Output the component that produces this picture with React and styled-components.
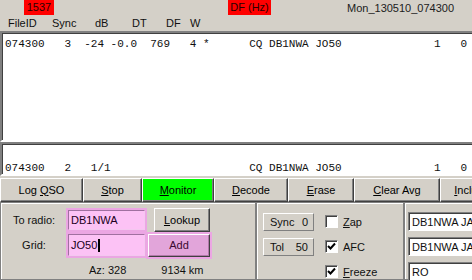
import React from "react";
import styled, { createGlobalStyle } from "styled-components";

const GlobalStyle = createGlobalStyle`
  html, body {
    margin: 0;
    padding: 0;
    width: 472px;
    height: 280px;
    overflow: hidden;
    background: #d4d0c8;
  }
`;

const Window = styled.div`
  width: 540px;
  height: 280px;
  display: flex;
  flex-direction: column;
  background: #d4d0c8;
  font-family: "Liberation Sans", Arial, sans-serif;
  font-size: 11px;
  color: #000;
  overflow: hidden;
  & > * {
    flex-shrink: 0;
  }
`;

const TopBar = styled.div`
  display: flex;
  align-items: center;
  height: 15px;
  padding-left: 24px;
`;

const RedTag = styled.div`
  width: ${(p) => p.$w}px;
  height: 15px;
  line-height: 15px;
  margin-left: ${(p) => p.$ml || 0}px;
  background: #ff0000;
  color: #2a0000;
  text-align: center;
`;

const Stamp = styled.div`
  margin-left: 76px;
  color: #202020;
`;

const HeaderRow = styled.div`
  display: grid;
  grid-template-columns: 44px 43px 37px 34px 24px auto;
  align-items: center;
  height: 16px;
  padding-left: 8px;
  color: #101010;
`;

const TextPane = styled.div`
  height: ${(p) => p.$h}px;
  box-sizing: border-box;
  padding: ${(p) => p.$pt}px 0 0 3px;
  background: #fff;
  border: 2px solid;
  border-color: #808080 #fff #fff #808080;
  box-shadow: inset 1px 1px #404040;
  font-family: "Liberation Mono", "Courier New", monospace;
  font-size: 11px;
  line-height: 14px;
  white-space: pre;
  color: #101010;
`;

const ButtonBar = styled.div`
  display: flex;
  height: 24px;
  margin-top: 2px;
`;

const ToolButton = styled.div`
  flex: none;
  width: ${(p) => p.$w}px;
  box-sizing: border-box;
  display: flex;
  align-items: center;
  justify-content: center;
  padding-bottom: 1px;
  background: ${(p) => (p.$on ? "#00ff00" : "#d4d0c8")};
  border: 1px solid;
  border-color: #fff #404040 #404040 #fff;
  box-shadow: inset -1px -1px #808080;
  color: #000;
`;

const Key = styled.span`
  text-decoration: underline;
`;

const BottomBar = styled.div`
  display: flex;
  height: 78px;
`;

const Group = styled.div`
  flex: none;
  width: ${(p) => p.$w}px;
  box-sizing: border-box;
  border: 1px solid #808080;
  box-shadow: inset 1px 1px #fff;
  padding: ${(p) => p.$pad};
`;

const FormRow = styled.div`
  display: flex;
  align-items: center;
  height: ${(p) => p.$h}px;
`;

const FieldLabel = styled.div`
  width: 56px;
  margin: 0 4px 0 5px;
  text-align: center;
  color: #101010;
`;

const PinkFrame = styled.div`
  width: ${(p) => p.$w}px;
  height: ${(p) => p.$h}px;
  box-sizing: border-box;
  padding: 2px;
  margin-left: ${(p) => p.$ml || 0}px;
  background: #eba6e3;
  display: flex;
`;

const PinkInput = styled.div`
  flex: 1;
  display: flex;
  align-items: center;
  padding-left: 2px;
  border: 1px solid;
  border-color: #a070a0 #f4c8f0 #f4c8f0 #a070a0;
  background: #fcc2f5;
  color: #200020;
`;

const Caret = styled.span`
  width: 2px;
  height: 13px;
  margin-left: 1px;
  background: #000;
`;

const FormButton = styled.div`
  width: ${(p) => p.$w}px;
  height: ${(p) => p.$h}px;
  box-sizing: border-box;
  display: flex;
  align-items: center;
  justify-content: center;
  margin-left: ${(p) => p.$ml || 0}px;
  background: ${(p) => (p.$pink ? "#e2a5da" : "#d4d0c8")};
  border: 1px solid;
  border-color: #fff #404040 #404040 #fff;
  box-shadow: inset -1px -1px ${(p) => (p.$pink ? "#b078a8" : "#808080")};
  color: ${(p) => (p.$pink ? "#3a0a30" : "#000")};
`;

const InfoRow = styled.div`
  display: flex;
  gap: 35px;
  margin-top: 6px;
  padding-left: 88px;
  color: #101010;
`;

const ControlGrid = styled.div`
  display: grid;
  grid-template-columns: 51px auto;
  grid-template-rows: repeat(3, 25px);
  column-gap: 11px;
  align-items: center;
`;

const ValueBox = styled.div`
  height: 18px;
  box-sizing: border-box;
  display: flex;
  align-items: center;
  justify-content: space-between;
  padding: 0 5px 0 6px;
  border: 1px solid;
  border-color: #fff #808080 #808080 #fff;
  color: #101010;
`;

const CheckRow = styled.div`
  grid-column: 2;
  display: flex;
  align-items: center;
  gap: 5px;
  color: #101010;
`;

const Box = styled.span`
  width: 13px;
  height: 13px;
  box-sizing: border-box;
  display: flex;
  align-items: center;
  justify-content: center;
  background: #fff;
  border: 1px solid;
  border-color: #808080 #fff #fff #808080;
  box-shadow: inset 1px 1px #404040;
`;

const MsgList = styled.div`
  display: grid;
  grid-template-rows: repeat(3, 25px);
  align-items: center;
`;

const MsgField = styled.div`
  height: 19px;
  box-sizing: border-box;
  display: flex;
  align-items: center;
  padding-left: 3px;
  background: #fff;
  border: 1px solid;
  border-color: #808080 #fff #fff #808080;
  box-shadow: inset 1px 1px #404040;
  white-space: nowrap;
  overflow: hidden;
  color: #101010;
`;

const Check = ({ on }) => (
  <Box>
    {on && (
      <svg width="9" height="9" viewBox="0 0 9 9">
        <path d="M1 4 L3.5 6.5 L8 1.5" fill="none" stroke="#000" strokeWidth="2" />
      </svg>
    )}
  </Box>
);

// decoded lines: left part, message starting at column 37, counts at 65 / 69
const decodeLine = (head) =>
  head.padEnd(37) + "CQ DB1NWA JO50".padEnd(28) + "1   0";

const line1 = decodeLine("074300   3  -24 -0.0  769   4 *");
const line2 = decodeLine("074300   2   1/1");

const App = () => {
  return (
    <>
      <GlobalStyle />
      <Window>
        <TopBar>
          <RedTag $w={30}>1537</RedTag>
          <RedTag $w={43} $ml={174}>DF (Hz)</RedTag>
          <Stamp>Mon_130510_074300</Stamp>
        </TopBar>
        <HeaderRow>
          <span>FileID</span>
          <span>Sync</span>
          <span>dB</span>
          <span>DT</span>
          <span>DF</span>
          <span>W</span>
        </HeaderRow>
        <TextPane $h={111} $pt={4}>{line1}</TextPane>
        <TextPane $h={34} $pt={3}>{"\n" + line2}</TextPane>
        <ButtonBar>
          <ToolButton $w={83}>Log&nbsp;<Key>Q</Key>SO</ToolButton>
          <ToolButton $w={59}><Key>S</Key>top</ToolButton>
          <ToolButton $w={72} $on><Key>M</Key>onitor</ToolButton>
          <ToolButton $w={74}><Key>D</Key>ecode</ToolButton>
          <ToolButton $w={66}><Key>E</Key>rase</ToolButton>
          <ToolButton $w={86}><Key>C</Key>lear Avg</ToolButton>
          <ToolButton $w={64}><Key>I</Key>nclude</ToolButton>
        </ButtonBar>
        <BottomBar>
          <Group $w={256} $pad="5px 0 0 0">
            <FormRow $h={24}>
              <FieldLabel>To radio:</FieldLabel>
              <PinkFrame $w={81} $h={24}>
                <PinkInput>DB1NWA</PinkInput>
              </PinkFrame>
              <FormButton $w={56} $h={24} $ml={7}>
                <Key>L</Key>ookup
              </FormButton>
            </FormRow>
            <FormRow $h={26}>
              <FieldLabel>Grid:</FieldLabel>
              <PinkFrame $w={81} $h={26}>
                <PinkInput>
                  JO50
                  <Caret />
                </PinkInput>
              </PinkFrame>
              <PinkFrame $w={66} $h={27} $ml={-1}>
                <FormButton $w={62} $h={23} $pink>
                  Add
                </FormButton>
              </PinkFrame>
            </FormRow>
            <InfoRow>
              <span>Az: 328</span>
              <span>9134 km</span>
            </InfoRow>
          </Group>
          <Group $w={148} $pad="6px 0 0 6px">
            <ControlGrid>
              <ValueBox>
                <span>Sync</span>
                <span>0</span>
              </ValueBox>
              <CheckRow>
                <Check />
                <span>
                  <Key>Z</Key>ap
                </span>
              </CheckRow>
              <ValueBox>
                <span>Tol</span>
                <span>50</span>
              </ValueBox>
              <CheckRow>
                <Check on />
                <span>AFC</span>
              </CheckRow>
              <CheckRow>
                <Check on />
                <span>
                  <Key>F</Key>reeze
                </span>
              </CheckRow>
            </ControlGrid>
          </Group>
          <Group $w={136} $pad="6px 0 0 3px">
            <MsgList>
              <MsgField>DB1NWA JA3TVF PM74</MsgField>
              <MsgField>DB1NWA JA3TVF -24</MsgField>
              <MsgField>RO</MsgField>
            </MsgList>
          </Group>
        </BottomBar>
      </Window>
    </>
  );
};

export default App;
